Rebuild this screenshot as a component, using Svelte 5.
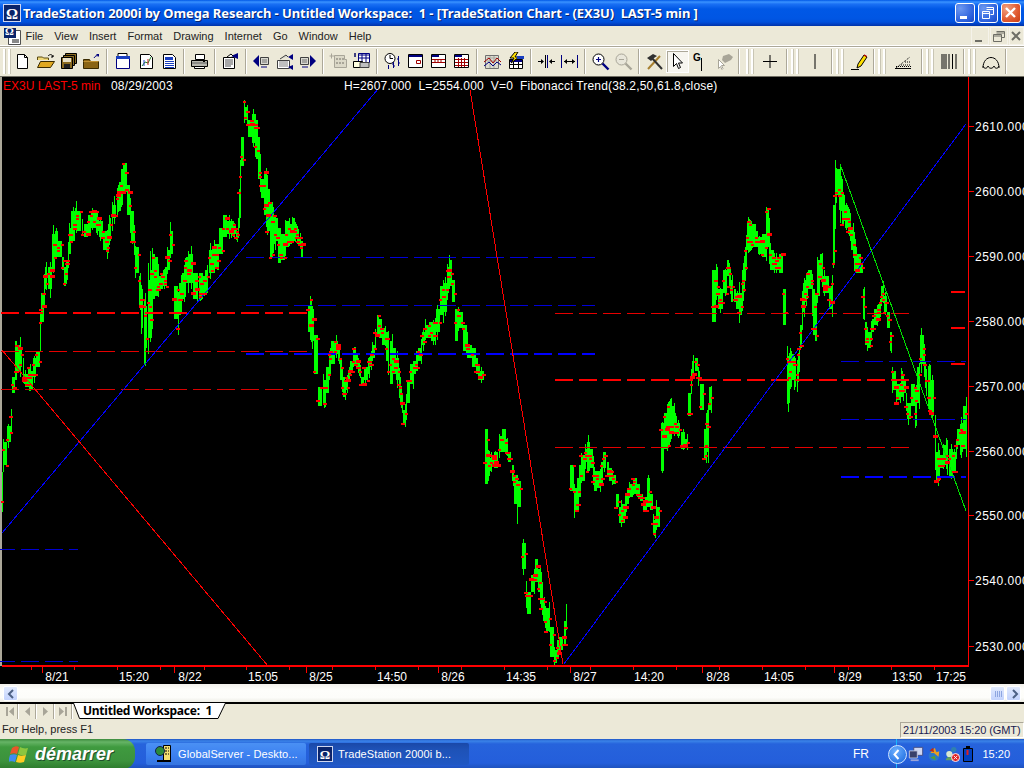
<script>
	// chart envelope, read off the screenshot: x, top y, bottom y
	const env = [
		[2,473,520],[4,467,488],[6,410,455],[8,427,450],[11,417,443],[13,383,398],[16,332,383],[21,337,377],[25,370,387],[31,365,392],[38,347,373],
		[42,293,338],[46,262,290],[51,262,300],[54,217,267],[58,235,255],[62,247,267],[66,273,293],[70,223,253],[75,197,233],[80,215,230],[85,223,242],
		[92,208,230],[100,215,237],[107,233,262],[112,203,233],[118,187,213],[126,152,200],[131,203,237],[135,228,257],[140,273,310],[145,303,370],
		[150,253,350],[155,242,307],[160,273,293],[166,267,287],[173,210,250],[177,300,345],[183,267,303],[190,242,287],[197,273,303],[205,273,298],
		[211,240,277],[218,240,270],[225,210,240],[235,223,237],[238,233,243],[241,145,213],[245,93,110],[248,117,140],[254,108,147],[258,123,173],
		[262,173,203],[266,165,223],[271,197,262],[276,213,247],[281,230,275],[285,220,257],[294,217,240],[300,233,247],[305,243,275],
		[308,293,338],[311,298,340],[315,313,357],[317,350,397],[319,383,423],[322,365,397],[325,383,410],[330,350,377],[335,332,360],[338,338,355],
		[342,365,390],[345,383,403],[350,363,377],[355,345,363],[360,363,377],[363,377,385],[367,363,385],[373,345,363],[378,312,337],[383,325,340],
		[390,333,385],[396,338,380],[402,390,410],[405,407,430],[410,363,397],[415,358,377],[422,337,363],[425,318,338],[432,320,345],[437,317,345],
		[440,280,330],[445,280,320],[450,253,287],[453,267,303],[456,307,345],[460,307,323],[465,325,353],[470,338,363],[475,350,368],[480,363,385],
		[484,370,380],[485,370,417],[486,417,495],[488,450,482],[493,453,468],[497,450,468],[503,423,452],[508,442,457],[512,462,475],[517,475,527],
		[520,475,508],[523,520,563],[526,577,600],[528,593,633],[532,573,597],[537,553,580],[541,567,607],[545,607,627],[549,600,633],[553,630,667],
		[556,650,667],[560,630,647],[563,643,667],[566,607,633],[568,593,622],
		[570,428,487],[573,468,508],[576,487,520],[580,463,507],[585,447,467],[590,430,473],[595,467,490],[600,470,493],[605,450,470],[610,467,482],
		[615,473,488],[619,500,527],[624,500,528],[628,488,503],[635,475,493],[640,488,500],[645,503,515],[650,463,503],[653,513,533],[656,520,540],
		[660,480,520],[663,410,463],[668,403,450],[672,397,437],[677,417,433],[682,428,450],[687,435,450],[690,383,410],[694,345,367],[698,363,377],
		[702,377,410],[705,423,463],[708,403,463],[711,383,403],[713,253,347],[716,253,293],[720,297,320],[724,273,300],[728,255,280],[733,280,307],
		[737,293,307],[741,280,325],[745,253,287],[748,217,253],[753,223,248],[758,233,247],[763,240,267],[768,203,260],[773,253,273],[778,253,273],
		[783,240,287],[785,288,338],[788,357,417],[792,345,380],[797,363,397],[800,343,367],[803,280,323],[807,273,300],[811,262,290],[815,293,358],
		[820,242,280],[825,277,300],[829,273,287],[832,298,333],[835,158,235],[838,170,197],[841,167,223],[845,200,227],[850,210,237],[854,230,270],
		[858,247,275],[862,260,277],[864,287,320],[867,330,358],[871,323,343],[875,305,327],[880,303,320],[883,278,300],[887,300,323],[890,317,333],
		[892,347,373],[895,377,403],[899,383,403],[903,363,393],[907,397,413],[910,407,430],[913,377,417],[916,390,430],[920,347,397],[923,318,360],
		[926,370,393],[930,363,413],[933,377,420],[936,423,480],[938,450,488],[942,450,470],[945,437,467],[950,443,482],[955,450,470],[958,430,447],
		[961,423,457],[965,397,457]
	];

	function at(x) {
		let i = 0;
		while (i < env.length - 2 && env[i + 1][0] <= x) i++;
		const [a, t0, b0] = env[i];
		const [c, t1, b1] = env[i + 1];
		const f = Math.min(1, (x - a) / (c - a));
		return [t0 + (t1 - t0) * f, b0 + (b1 - b0) * f];
	}

	let seed = 4711;
	const rnd = () => (seed = (seed * 16807) % 2147483647) / 2147483647;
	// prices move in half points, which is about 3.25px on this scale
	const snap = (y) => Math.round(Math.round(y / 3.25) * 3.25);

	let green = '';
	let ticks = '';
	function tick(x, y) {
		const r = rnd();
		if (r < 0.12) ticks += `M${x - 1} ${y - 1}h5v3h-5z`;
		else if (r < 0.4) ticks += `M${x - 1} ${y}h4v2h-4z`;
		else ticks += `M${x} ${y}h3v2h-3z`;
	}

	let px = 2;
	while (px < 966) {
		const r = rnd();
		const w = r < 0.35 ? 1 : r < 0.6 ? 2 : r < 0.85 ? 3 : 4;
		if (px <= 307 && px + w > 305) {
			px = 308;
			continue;
		}
		if (px <= 569 && px + w > 568) {
			px = 570;
			continue;
		}
		const [top, bot] = at(px + w / 2);
		const span = bot - top;
		let t = Math.round(top);
		let b = Math.round(bot);
		if (w > 1) {
			t = snap(top + rnd() * span * 0.25);
			b = snap(bot - rnd() * span * 0.25);
			if (b - t < 4) b = t + 4;
			if (rnd() < 0.55) green += `M${px + Math.floor(rnd() * w)} ${Math.round(top)}h1v${Math.round(span)}h-1z`;
		}
		green += `M${px} ${t}h${w}v${b - t}h${-w}z`;
		tick(px - 1, snap(t + rnd() * (b - t)));
		if (w > 1) tick(px + w - 1, snap(t + rnd() * (b - t)));
		px += w + (rnd() < 0.08 ? 1 : 0);
	}

	const dashes = [
		{ x1: 1, x2: 308, y: 312.5, w: 2, c: '#ff0000' },
		{ x1: 1, x2: 308, y: 351.5, w: 1, c: '#e60000' },
		{ x1: 1, x2: 308, y: 389.5, w: 1, c: '#d80000' },
		{ x1: -3, x2: 78, y: 549.5, w: 1, c: '#0000d0' },
		{ x1: -3, x2: 78, y: 661.5, w: 1, c: '#0000d0' },
		{ x1: 246, x2: 595, y: 257.5, w: 1, c: '#0000d8' },
		{ x1: 246, x2: 595, y: 305.5, w: 1, c: '#0000d8' },
		{ x1: 246, x2: 595, y: 354, w: 2, c: '#0000ff' },
		{ x1: 555, x2: 910, y: 313.5, w: 1, c: '#e60000' },
		{ x1: 555, x2: 910, y: 380, w: 2, c: '#ff0000' },
		{ x1: 555, x2: 910, y: 447.5, w: 1, c: '#e60000' },
		{ x1: 841, x2: 966, y: 361.5, w: 1, c: '#0000d8' },
		{ x1: 841, x2: 966, y: 419.5, w: 1, c: '#0000d8' },
		{ x1: 841, x2: 966, y: 477, w: 2, c: '#0000ff' },
		{ x1: 951, x2: 965, y: 292, w: 2, c: '#ff0000' },
		{ x1: 951, x2: 965, y: 328, w: 2, c: '#ff0000' },
		{ x1: 951, x2: 965, y: 364, w: 2, c: '#ff0000' }
	];

	const trends = [
		{ d: 'M2 533L378 89', c: '#0000ff' },
		{ d: 'M2 350L268 666', c: '#ff0000' },
		{ d: 'M470 90L563 664', c: '#ff0000' },
		{ d: 'M564 664L966 124', c: '#0000ff' },
		{ d: 'M840 164L966 511', c: '#00e000' }
	];

	const prices = [[2610, 126], [2600, 191], [2590, 256], [2580, 321], [2570, 386], [2560, 451], [2550, 515], [2540, 580], [2530, 646]];
	const dates = [
		['8/21', 57], ['15:20', 134], ['8/22', 190], ['15:05', 263], ['8/25', 321], ['14:50', 392], ['8/26', 453], ['14:35', 521],
		['8/27', 585], ['14:20', 649], ['8/28', 718], ['14:05', 779], ['8/29', 850], ['13:50', 907], ['17:25', 951]
	];
	const minor = [31, 74, 117, 160, 204, 246, 289, 332, 375, 418, 461, 504, 547, 590, 633, 676, 719, 762, 805, 848, 891, 934];
	const major = [42, 174, 306, 438, 570, 702, 834];

	const menus = ['File', 'View', 'Insert', 'Format', 'Drawing', 'Internet', 'Go', 'Window', 'Help'];

	const ic = {
		new: `<path d="M4.5 2.5h7l3 3v11h-10z" fill="#fff" stroke="#000"/><path d="M11.5 2.5v3h3" fill="none" stroke="#000"/>`,
		open: `<path d="M1.5 8v-3h5l1 1h5v2" fill="#f0d878" stroke="#5a4a10"/><path d="M1.5 15.5l3-6h14l-4 6z" fill="#e0a820" stroke="#3a2a00"/><path d="M12 4c2-2 4-2 5 1M17 3v2h-2" stroke="#000" fill="none"/>`,
		save: `<path d="M6.5 1.5h11v10h-11z" fill="#8a6a20" stroke="#000"/><path d="M4.5 3.5h11v10h-11z" fill="#8a6a20" stroke="#000"/><path d="M2.5 5.5h11v11h-11z" fill="#8a6a20" stroke="#000"/><path d="M4 6h8v4H4z" fill="#e8e0c8"/><path d="M5 12h6v4H5z" fill="#222"/>`,
		up: `<path d="M1.5 7.5h6l1 2h8v7h-15z" fill="#8a6414" stroke="#3a2a00"/><path d="M1.5 9.5h15" stroke="#c09030"/><path d="M12 6c1-2 3-3 4-2" stroke="#000080" fill="none"/><path d="M14 2h3v3z" fill="#000080"/>`,
		win: `<path d="M5 1.500h9v3H5z" fill="#fff" stroke="#000"/><path d="M3.500 4.500h13v12h-13z" fill="#fff" stroke="#000080"/><path d="M3 4h14v3H3z" fill="#1a3fc0"/>`,
		chart: `<path d="M4.500 2.500h9l3 3v11h-12z" fill="#fff" stroke="#000"/><path d="M6 14l3-4 3 1 3-6" fill="none" stroke="#208020"/><path d="M8 8v6" stroke="#2040c0"/><path d="M12 7v6" stroke="#c02020"/>`,
		list: `<path d="M4.500 2.500h9l3 3v11h-12z" fill="#fff" stroke="#000"/><path d="M6 5h8v3H6z" fill="#1a3fc0"/><path d="M6 9.500h9M6 11.500h9M6 13.500h9M6 15.500h9" stroke="#1a3fc0"/>`,
		print: `<path d="M5.500 2.500h9v5h-9z" fill="#fff" stroke="#000"/><path d="M1.500 8.500h16v6h-16z" fill="#b8b8b0" stroke="#000"/><path d="M2 11h15" stroke="#606060"/><path d="M4.500 14.500h10v2h-10z" fill="#fff" stroke="#000"/><path d="M13 9h2v1h-2z" fill="#000"/>`,
		props: `<path d="M2.500 5.500h11v11h-11z" fill="#fff" stroke="#000"/><path d="M4 8h8M4 10h8M4 12h8M4 14h6" stroke="#505050"/><path d="M10 4l7-3v6z" fill="#000080"/><path d="M6 5l4-3 2 2" fill="#fff" stroke="#000"/>`,
		prev: `<path d="M1 9l6-6v12z" fill="#000080"/><path d="M8.500 5.500h8v7h-8z" fill="#d8d8d0" stroke="#404040"/><path d="M10 8h5M10 10h5" stroke="#707070"/><path d="M9 15h6" stroke="#000080"/>`,
		both: `<path d="M2.500 8.500h12v8h-12z" fill="#fff" stroke="#404040"/><path d="M4 10h9M4 12h9M4 14h9" stroke="#808080"/><path d="M5 7l6-4 2 2" fill="#d8d8d0" stroke="#404040"/><path d="M13 5l5-3v6z" fill="#000080"/><path d="M13 15l5-2v5z" fill="#000080"/>`,
		next: `<path d="M18 9l-6-6v12z" fill="#000080"/><path d="M2.500 5.500h8v7h-8z" fill="#d8d8d0" stroke="#404040"/><path d="M4 8h5M4 10h5" stroke="#707070"/><path d="M4 15h6" stroke="#000080"/>`,
		dis: `<path d="M5.500 3.500h10v4h2v8h-12z" fill="#dcd9c8" stroke="#a8a598"/><path d="M2.500 1.500v5M0.500 4h5" stroke="#a8a598"/><path d="M7 6h2v2H7zM10 6h2v2h-2zM13 6h2v2h-2zM7 10h2v2H7zM10 10h2v2h-2zM13 10h2v2h-2z" fill="#a8a598"/>`,
		win2: `<path d="M6.500 1.500h11v9h-11z" fill="#fff" stroke="#000080"/><path d="M7 3h10M7 6h10M10 2v8M14 2v8" stroke="#000080"/><path d="M1.500 9.500h9v6h-9z" fill="#ffffe0" stroke="#000"/><path d="M8 10.500h9v5H8z" fill="#c0c0c0" stroke="#404040"/><path d="M2 1h2v4H2z" fill="#404080"/>`,
		clock: `<circle cx="7" cy="6.500" r="5" fill="#fff" stroke="#000"/><path d="M7 3v3.500h3" fill="none" stroke="#000"/><path d="M15.500 4v10M14 7h1.500M15.500 11H17M10.500 10v6M9 12h1.500M10.500 14H12M5.500 13v4" stroke="#000080"/>`,
		cal1: `<path d="M2.500 2.500h14v13h-14z" fill="#fff" stroke="#000"/><path d="M3 3h13v2H3z" fill="#000080"/><path d="M10.500 8.500h4v3h-4z" fill="#fff" stroke="#a00000"/>`,
		cal2: `<path d="M2.500 2.500h14v13h-14z" fill="#fff" stroke="#000"/><path d="M3 3h7v2H3z" fill="#000080"/><path d="M3 7.500h13M3 10.500h13" stroke="#a00000"/><path d="M6 7v4M9 7v4M12 7v4" stroke="#a00000"/>`,
		cal3: `<path d="M2.500 2.500h14v13h-14z" fill="#fff" stroke="#000"/><path d="M3 3h7v2H3z" fill="#000080"/><path d="M3 7.500h13M3 10.500h13M3 13.500h13M6.500 6v9M9.500 6v9M12.500 6v9" stroke="#a00000"/>`,
		wave: `<path d="M2.500 3.500h13v13h-13z" fill="#dcdcd0" stroke="#707070"/><path d="M4 6h10M4 9h10M7 4v12M11 4v12" stroke="#a8a8a0"/><path d="M1 10l5-4 4 5 4-5 4 4" fill="none" stroke="#a00000"/><path d="M1 14l5-4 4 4 4-4 4 3" fill="none" stroke="#000080"/>`,
		flash: `<path d="M3.500 7.500h13v9h-13z" fill="#fff" stroke="#000"/><path d="M4 8h12v2H4z" fill="#000080"/><path d="M4 12.500h12M7.500 10v6M12.500 10v6" stroke="#000"/><path d="M9 0L4 6h4L5 11l8-6H9l3-5z" fill="#ffe000" stroke="#000"/><path d="M11 4h7v3h-7z" fill="#1a3fc0"/>`,
		expand: `<path d="M1 9.500h5M13 9.500h5" stroke="#000"/><path d="M4 7l3 2.500-3 2.500zM15 7l-3 2.500 3 2.500z" fill="#000"/><path d="M8.500 3v13" stroke="#000"/><path d="M10.500 3v13" stroke="#000080"/>`,
		shrink: `<path d="M1.500 3v13M17.500 3v13" stroke="#000080"/><path d="M4 9.500h11" stroke="#000"/><path d="M7 7L4 9.500 7 12zM12 7l3 2.500-3 2.500z" fill="#000"/>`,
		zin: `<circle cx="7.500" cy="7.500" r="5.500" fill="#fff" stroke="#000"/><path d="M5 7.500h5M7.500 5v5" stroke="#000080" stroke-width="1.200"/><path d="M11.500 11.500l6 6" stroke="#000080" stroke-width="2.400"/>`,
		zout: `<circle cx="7.500" cy="7.500" r="5.500" fill="#e8e6da" stroke="#a8a598"/><path d="M5 7.500h5" stroke="#a8a598"/><path d="M11.500 11.500l6 6" stroke="#a8a598" stroke-width="2.400"/>`,
		tools: `<path d="M3 17L15 4" stroke="#a88030" stroke-width="2"/><path d="M17 17L6 5" stroke="#303030" stroke-width="2"/><path d="M2 6l6-4 4 2-3 2-3 3z" fill="#303030"/>`,
		cursor: `<path d="M5.500 1.500v13l3-3 2 5 2-1-2-4.500h4z" fill="#fff" stroke="#000"/>`,
		gline: `<path d="M10.500 6v13" stroke="#000"/>`,
		dim: `<path d="M9 4l6-2 4 3-2 3-6 3-3-3z" fill="#a8a598"/><path d="M4.500 7.500v9l2-2 1.500 3 1-1-1.500-3h3z" fill="#fff" stroke="#a8a598"/>`,
		cross: `<path d="M10 3v13M3 9.500h14" stroke="#000"/>`,
		vline: `<path d="M10 2v15" stroke="#000"/>`,
		pen: `<path d="M2 17.500h8" stroke="#000"/><path d="M8 16l1-4 6-9 3 2-6 9z" fill="#ffe000" stroke="#000"/><path d="M14.500 3.500l1-1 2.500 1.500-.5 1z" fill="#c00000"/>`,
		angle: `<path d="M1 16.500h16" stroke="#000"/><path d="M2 14.500h15M2 16l14-11" stroke="#000" stroke-dasharray="1 1"/><path d="M7 13h10" stroke="#000" stroke-dasharray="1 1"/><path d="M11 10h6" stroke="#000" stroke-dasharray="1 1"/>`,
		bars: `<path d="M3 2v15M5 2v15M7 2v15M10 2v15M13.500 2v15M17 2v15" stroke="#000"/>`,
		arcs: `<path d="M2 16c0-14 16-14 16 0" fill="none" stroke="#000"/><path d="M2 14c1 3 4 3 5 0 1 3 5 3 6 0 1 3 4 3 5 0" fill="none" stroke="#000"/>`
	};

	const left = [
		['new', 'open', 'save', 'up'],
		['win', 'chart', 'list'],
		['print'],
		['props'],
		['prev', 'both', 'next'],
		['dis', 'win2'],
		['clock', 'cal1', 'cal2', 'cal3'],
		['wave', 'flash'],
		['expand', 'shrink'],
		['zin', 'zout'],
		['tools', 'cursor', 'gline', 'dim']
	];
	const right = [
		{ w: 43, icon: 'cross' },
		{ w: 43, icon: 'vline' },
		{ w: 40, icon: 'pen' },
		{ w: 46, icon: 'angle' },
		{ w: 40, icon: 'bars' },
		{ w: 40, icon: 'arcs' }
	];
</script>

<div class="desktop">
	<div class="titlebar">
		<div class="appicon">Ω</div>
		<div class="title">TradeStation 2000i by Omega Research - Untitled Workspace:  1 - [TradeStation Chart - (EX3U)  LAST-5 min ]</div>
		<div class="capbtn blue">
			<svg width="20" height="20" viewBox="0 0 20 20"><path d="M5 13h7v3H5z" fill="#fff" /></svg>
		</div>
		<div class="capbtn blue">
			<svg width="20" height="20" viewBox="0 0 20 20"><path d="M8.500 4.500h7v7h-3M8.500 6.500h7" fill="none" stroke="#fff" /><path d="M4.500 8.500h7v7h-7zM4.500 10.500h7" fill="none" stroke="#fff" /></svg>
		</div>
		<div class="capbtn red">
			<svg width="20" height="20" viewBox="0 0 20 20"><path d="M5 5l9 9M14 5l-9 9" stroke="#fff" stroke-width="2.400" /></svg>
		</div>
	</div>

	<div class="menubar">
		<div class="docicon">
			<svg width="19" height="18" viewBox="0 0 19 18"><path d="M5.500 3.500h12v14h-12z" fill="#fff" stroke="#505050" /><path d="M1 1h12v10H1z" fill="#0a246a" /><path d="M9 12h7v4H9z" fill="#888" /></svg>
			<span>Ω</span>
		</div>
		{#each menus as m}
			<span class="menu">{m}</span>
		{/each}
		<div class="mdi">
			<div class="mdibtn"><svg width="18" height="17" viewBox="0 0 18 17"><path d="M4 12h7v2H4z" fill="#6e6e66" /></svg></div>
			<div class="mdibtn"><svg width="18" height="17" viewBox="0 0 18 17"><path d="M6.500 3.500h8v6h-3M6.500 5h8" fill="none" stroke="#6e6e66" /><path d="M3.500 6.500h8v7h-8zM3.500 8h8" fill="none" stroke="#6e6e66" /></svg></div>
			<div class="mdibtn"><svg width="15" height="17" viewBox="0 0 15 17"><path d="M3 4l8 8M11 4l-8 8" stroke="#6e6e66" stroke-width="2" /></svg></div>
		</div>
	</div>

	<div class="toolbar">
		<div class="grip first"></div>
		{#each left as group}
			{#each group as name}
				<div class="tbtn" class:pressed={name === 'cursor'}>
					{#if name === 'gline'}<b class="g">G</b>{/if}
					<svg width="20" height="19" viewBox="0 0 20 19">{@html ic[name]}</svg>
				</div>
			{/each}
			<div class="sep"></div>
		{/each}
		{#each right as group}
			<div class="rgroup" style="width:{group.w}px">
				<div class="grip"></div>
				<div class="tbtn grow">
					<svg width="20" height="19" viewBox="0 0 20 19">{@html ic[group.icon]}</svg>
				</div>
			</div>
			<div class="sep tight"></div>
		{/each}
	</div>

	<svg class="chart" width="1024" height="607" viewBox="0 77 1024 607" shape-rendering="crispEdges">
		<rect x="0" y="77" width="1024" height="607" fill="#000" />
		<rect x="0" y="77" width="2" height="607" fill="#aca899" />
		<path d={green} fill="#00ff00" />
		{#each dashes as l}
			<line x1={l.x1} x2={l.x2} y1={l.y} y2={l.y} stroke={l.c} stroke-width={l.w} stroke-dasharray="18 6" />
		{/each}
		{#each trends as t}
			<path d={t.d} stroke={t.c} fill="none" />
		{/each}
		<path d={ticks} fill="#ff0000" />
		<rect x="0" y="666" width="1024" height="18" fill="#000" />
		<rect x="2" y="665" width="967" height="2" fill="#ff0000" />
		<rect x="968" y="77" width="1" height="590" fill="#ff0000" />
		{#each minor as x}
			<rect {x} y="667" width="1" height="3" fill="#ff0000" />
		{/each}
		{#each major as x}
			<rect {x} y="667" width="1" height="6" fill="#ff0000" />
		{/each}
		{#each prices as [p, y]}
			<rect x="969" {y} width="5" height="1" fill="#ff0000" />
			<text class="lbl axis" x="975" y={y + 5}>{p}.000</text>
		{/each}
		{#each dates as [d, x]}
			<text class="lbl" {x} y="681" text-anchor="middle">{d}</text>
		{/each}
		<text class="lbl red" x="3" y="90">EX3U LAST-5 min</text>
		<text class="lbl wide" x="111" y="90">08/29/2003</text>
		<text class="lbl wide" x="344" y="90" xml:space="preserve">H=2607.000  L=2554.000  V=0  Fibonacci Trend(38.2,50,61.8,close)</text>
	</svg>

	<div class="hscroll">
		<div class="sbtn">
			<svg width="15" height="14" viewBox="0 0 15 14"><path d="M9 3L5 7l4 4" fill="none" stroke="#4d6185" stroke-width="2" /></svg>
		</div>
		<div class="track"></div>
		<div class="thumb">
			<svg width="14" height="14" viewBox="0 0 14 14"><path d="M4.500 4v6M6.500 4v6M8.500 4v6M10.500 4v6" stroke="#8ea6e0" /></svg>
		</div>
		<div class="sbtn">
			<svg width="15" height="14" viewBox="0 0 15 14"><path d="M6 3l4 4-4 4" fill="none" stroke="#4d6185" stroke-width="2" /></svg>
		</div>
	</div>

	<div class="tabs">
		<div class="nav"><svg width="17" height="15" viewBox="0 0 17 15"><path d="M5 3h2v9H5zM13 3v9L8 7.500z" fill="#a8a598" /></svg></div>
		<div class="nav"><svg width="17" height="15" viewBox="0 0 17 15"><path d="M11 3v9L6 7.500z" fill="#a8a598" /></svg></div>
		<div class="nav"><svg width="17" height="15" viewBox="0 0 17 15"><path d="M6 3v9l5-4.500z" fill="#a8a598" /></svg></div>
		<div class="nav"><svg width="17" height="15" viewBox="0 0 17 15"><path d="M4 3v9l5-4.500zM10 3h2v9h-2z" fill="#a8a598" /></svg></div>
		<div class="tab">
			<svg class="tabshape" width="154" height="16" viewBox="0 0 154 16"><path d="M0.500 0L6.500 15.500H145L152.500 0" fill="#fff" stroke="#000" /></svg>
			<span>Untitled Workspace:  1</span>
		</div>
	</div>

	<div class="status">
		<span class="help">For Help, press F1</span>
		<div class="clockbox">21/11/2003 15:20 (GMT)</div>
	</div>

	<div class="taskbar">
		<div class="start">
			<svg width="22" height="21" viewBox="0 0 22 21">
				<path d="M3 4c3-2 5-2 7-1l-2 7c-2-1-4-1-7 0z" fill="#e8562a" />
				<path d="M11 3c2 1 5 2 8 1l-2 7c-3 1-5 0-8-1z" fill="#8cc63f" />
				<path d="M1 11c3-1 5-1 7 0l-2 7c-2-1-4-1-7 0z" fill="#3f8cf0" />
				<path d="M9 11c2 1 5 1 8 0l-2 7c-3 1-5 1-8 0z" fill="#ffcc22" />
			</svg>
			<span>démarrer</span>
		</div>
		<div class="task">
			<svg width="20" height="20" viewBox="0 0 20 20">
				<path d="M9.500 1.500h7v15h-7z" fill="#f4e070" stroke="#000" />
				<path d="M11 4h4M11 7h4M11 10h4" stroke="#000" stroke-dasharray="2 1" />
				<circle cx="6" cy="7" r="4.500" fill="#2a8a3a" stroke="#102050" />
				<path d="M3 16h14v2H3z" fill="#000" />
			</svg>
			<span>GlobalServer - Deskto...</span>
		</div>
		<div class="task active">
			<div class="appicon small">Ω</div>
			<span>TradeStation 2000i b...</span>
		</div>
		<div class="lang">FR</div>
		<div class="tray">
			<div class="chev"><svg width="17" height="17" viewBox="0 0 17 17"><path d="M9.500 4l-4 4.500 4 4.500" fill="none" stroke="#fff" stroke-width="2" /></svg></div>
			<svg class="ticon" width="16" height="16" viewBox="0 0 18 18"><path d="M6.500 1.500h10v9h-10z" fill="#cfd6f0" stroke="#404880" /><path d="M1.500 5.500h9v8h-9z" fill="#39406a" stroke="#c8cce0" /><path d="M3 15h9v2H3z" fill="#9aa4d8" /></svg>
			<svg class="ticon" width="16" height="16" viewBox="0 0 18 18"><circle cx="9" cy="11" r="6" fill="#2c78c8" /><path d="M5 8l5-6 2 6zM9 8l6-2-1 6z" fill="#e8a020" /><path d="M4 5l4-3 1 5z" fill="#c02818" /><path d="M5 13l5-2 1 5z" fill="#58a030" /></svg>
			<svg class="ticon" width="16" height="16" viewBox="0 0 18 18"><circle cx="6" cy="9" r="3.500" fill="#d8e8d0" /><circle cx="11" cy="4" r="3" fill="#3080b0" /><path d="M2 16c0-5 8-5 8 0z" fill="#60a060" /><circle cx="13" cy="13" r="4.500" fill="#e02020" stroke="#fff" /><path d="M11 11l4 4M15 11l-4 4" stroke="#fff" /></svg>
			<svg class="ticon" width="12" height="18" viewBox="0 0 12 18"><path d="M1.500 3.500h9v13h-9z" fill="#0040c0" stroke="#000" /><path d="M4 1h4v2H4z" fill="#000" /><path d="M5.500 5v5" stroke="#e02020" stroke-width="2" /></svg>
			<span class="time">15:20</span>
		</div>
	</div>
</div>

<style>
	:global(body) {
		margin: 0;
		background: #ece9d8;
	}

	.desktop {
		width: 1024px;
		height: 768px;
		display: flex;
		flex-direction: column;
		overflow: hidden;
		font-family: 'Liberation Sans', sans-serif;
		font-size: 11px;
		color: #000;
	}

	.titlebar {
		height: 26px;
		display: flex;
		align-items: center;
		flex: none;
		padding: 0 3px;
		background: linear-gradient(#0058e6 0, #3a93ff 2px, #1a70f4 4px, #0058e6 9px, #0056e4 18px, #0050dc 22px, #0241c4 24px, #0034a8 26px);
		color: #fff;
		box-sizing: border-box;
	}

	.appicon {
		width: 18px;
		height: 18px;
		flex: none;
		background: #0a246a;
		color: #fff;
		font: bold 15px/18px 'Liberation Serif', serif;
		text-align: center;
		border: 1px solid #cfd6f0;
		box-sizing: border-box;
		margin-right: 2px;
	}

	.appicon.small {
		width: 16px;
		height: 16px;
		font-size: 13px;
		line-height: 15px;
		margin-right: 0;
	}

	.title {
		flex: 1;
		white-space: pre;
		font: bold 13px 'Noto Sans', sans-serif;
		letter-spacing: -0.08px;
		text-shadow: 1px 1px #0a246a;
	}

	.capbtn {
		width: 20px;
		height: 20px;
		margin-left: 3px;
		box-sizing: border-box;
		border: 1px solid #fff;
		border-radius: 3px;
		overflow: hidden;
	}

	.capbtn svg {
		display: block;
		margin: -1px;
	}

	.capbtn.blue {
		background: radial-gradient(circle at 25% 25%, #6c98f0, #2a5fdc 70%, #1c48c0);
	}

	.capbtn.red {
		background: radial-gradient(circle at 25% 25%, #f0a080, #e05a30 60%, #c83c14);
	}

	.menubar {
		height: 19px;
		flex: none;
		display: flex;
		align-items: center;
		background: #ece9d8;
		padding-left: 3px;
		border-bottom: 1px solid #fff;
		color: #222;
	}

	.docicon {
		width: 17px;
		height: 18px;
		position: relative;
		flex: none;
	}

	.docicon svg {
		display: block;
	}

	.docicon span {
		position: absolute;
		left: 2px;
		top: -2px;
		color: #fff;
		font: bold 11px 'Liberation Serif', serif;
	}

	.menu {
		padding: 0 5.5px;
	}

	.mdi {
		margin-left: auto;
		display: flex;
		height: 18px;
		gap: 1px;
	}

	.mdibtn {
		border: 1px solid #f5f3ea;
		background: #ece9d8;
		height: 16px;
		overflow: hidden;
	}

	.mdibtn svg {
		display: block;
		margin: 0 -1px;
	}

	.toolbar {
		height: 31px;
		flex: none;
		display: flex;
		align-items: center;
		background: #ece9d8;
		box-sizing: border-box;
		padding-left: 3px;
		border-top: 1px solid #aca899;
		border-bottom: 1px solid #716f64;
		box-shadow: inset 0 1px #fff;
	}

	.grip {
		width: 8px;
		height: 25px;
		flex: none;
		background: linear-gradient(90deg, #fff 0 2px, #c8c5b4 2px 3px, transparent 3px 5px, #fff 5px 7px, #c8c5b4 7px 8px);
	}

	.tbtn {
		width: 23px;
		height: 23px;
		flex: none;
		display: flex;
		align-items: center;
		justify-content: center;
		position: relative;
		box-sizing: border-box;
	}

	.tbtn.grow {
		flex: 1;
	}

	.tbtn.pressed {
		background: #f7f6f0;
		border: 1px solid #fff;
		box-shadow: inset 1px 1px #aca899;
	}

	.g {
		position: absolute;
		left: 4px;
		top: 2px;
		font: bold 10px 'Liberation Sans', sans-serif;
	}

	.sep {
		width: 2px;
		height: 25px;
		flex: none;
		margin: 0 3px;
		background: #aca899;
		border-right: 1px solid #fff;
		box-sizing: border-box;
	}

	.sep.tight {
		margin: 0;
	}

	.rgroup {
		display: flex;
		align-items: center;
		flex: none;
		padding-left: 3px;
		box-sizing: border-box;
	}

	.chart {
		display: block;
		flex: none;
	}

	.lbl {
		font: 12px 'Liberation Sans', sans-serif;
		fill: #fff;
		white-space: pre;
		shape-rendering: auto;
	}

	.lbl.red {
		fill: #ff0000;
	}

	.lbl.wide {
		letter-spacing: 0.17px;
	}

	.lbl.axis {
		letter-spacing: 0.5px;
	}

	.hscroll {
		height: 19px;
		flex: none;
		display: flex;
		align-items: center;
		padding: 0 3px;
		background: linear-gradient(#f3f1ec, #fefefb 30%, #fdfdfa 75%, #eeede5);
		border-bottom: 1px solid #000;
		box-sizing: border-box;
	}

	.sbtn,
	.thumb {
		width: 15px;
		height: 15px;
		flex: none;
		box-sizing: border-box;
		border: 1px solid #fff;
		border-radius: 2px;
		background: linear-gradient(#e1eafe, #c3d3fd);
	}

	.sbtn svg,
	.thumb svg {
		display: block;
	}

	.thumb {
		margin-right: 1px;
	}

	.track {
		flex: 1;
	}

	.tabs {
		height: 16px;
		flex: none;
		display: flex;
		align-items: flex-start;
		background: #ece9d8;
		padding-left: 1px;
		border-top: 1px solid #000;
		box-sizing: border-box;
	}

	.nav {
		width: 17px;
		height: 15px;
		flex: none;
		border-right: 1px solid #fff;
		box-shadow: inset -1px 0 #aca899;
	}

	.nav svg {
		display: block;
	}

	.tab {
		position: relative;
		width: 154px;
		height: 16px;
		flex: none;
	}

	.tabshape {
		position: absolute;
		left: 0;
		top: -1px;
	}

	.tab span {
		position: absolute;
		left: 10px;
		top: -1px;
		white-space: pre;
		font: bold 12px/15px 'Noto Sans', sans-serif;
		letter-spacing: -0.25px;
	}

	.status {
		height: 20px;
		flex: none;
		display: flex;
		align-items: center;
		justify-content: space-between;
		background: #ece9d8;
		padding-left: 2px;
		color: #222;
	}

	.clockbox {
		width: 124px;
		height: 16px;
		margin-top: 2px;
		box-sizing: border-box;
		border: 1px solid;
		border-color: #aca899 #fff #fff #aca899;
		padding-left: 2px;
		line-height: 15px;
		letter-spacing: -0.1px;
		white-space: nowrap;
		color: #202050;
	}

	.taskbar {
		height: 30px;
		flex: none;
		display: flex;
		align-items: center;
		background: linear-gradient(#1f54c4 0, #3a83e8 2px, #2663dc 5px, #245edb 24px, #1e50b8 30px);
		color: #fff;
	}

	.start {
		width: 135px;
		height: 30px;
		flex: none;
		box-sizing: border-box;
		display: flex;
		align-items: center;
		gap: 4px;
		padding-left: 9px;
		border-radius: 0 12px 12px 0;
		background: linear-gradient(#3c8a3c 0, #66b466 3px, #3f9a3f 8px, #3c923c 22px, #2d7a2d 30px);
		font: italic bold 18px 'Liberation Sans', sans-serif;
		text-shadow: 1px 1px #20502c;
	}

	.task {
		width: 160px;
		height: 22px;
		flex: none;
		margin-left: 11px;
		padding-left: 8px;
		box-sizing: border-box;
		display: flex;
		align-items: center;
		gap: 4px;
		border-radius: 2px;
		letter-spacing: 0.1px;
		background: linear-gradient(#4a90f4, #3b7ff0 60%, #3575e0);
		white-space: nowrap;
	}

	.task.active {
		margin-left: 3px;
		gap: 5px;
		background: linear-gradient(#1a48a8, #1e52b7 30%, #2058c4);
	}

	.lang {
		margin-left: auto;
		margin-right: 27px;
		font-size: 12px;
	}

	.tray {
		width: 128px;
		height: 30px;
		flex: none;
		display: flex;
		align-items: center;
		box-sizing: border-box;
		border-left: 1px solid #18bbff;
	}

	.chev {
		width: 17px;
		height: 17px;
		border-radius: 50%;
		border: 1px solid #cfe4ff;
		background: radial-gradient(circle at 40% 30%, #6cb0ff, #1464dc);
		margin-left: -9px;
		margin-right: 1px;
		flex: none;
	}

	.chev svg {
		display: block;
	}

	.ticon {
		margin-right: 2px;
		flex: none;
	}

	.time {
		margin-left: auto;
		margin-right: 14px;
	}
</style>
